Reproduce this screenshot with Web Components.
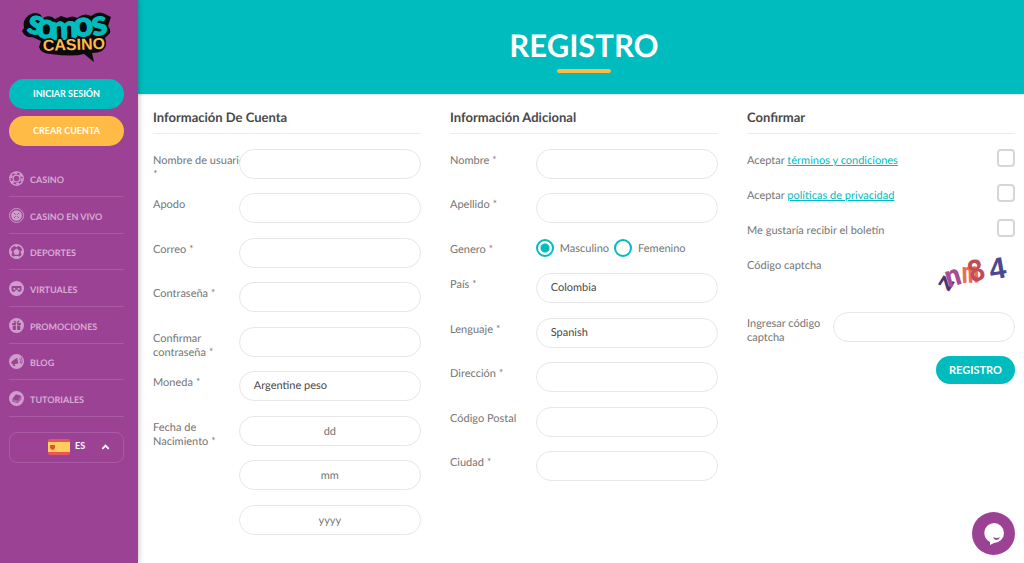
<!DOCTYPE html>
<html lang="es">
<head>
<meta charset="utf-8">
<meta name="viewport" content="width=device-width, initial-scale=1">
<title>Somos Casino - Registro</title>
<style>
  :root {
    --purple: #9c4295;
    --teal: #00bcbe;
    --amber: #ffbb46;
    --line: #ececec;
    --text: #757575;
    --dark: #484848;
  }
  body {
    margin: 0;
    background: #fff;
    color: var(--text);
    font-family: Lato, "Open Sans", sans-serif;
    font-size: 11px;
    line-height: 14px;
    text-rendering: geometricPrecision;
  }
</style>
</head>
<body>
<casino-app>
  <side-bar slot="side">
    <nav-item icon="chip">CASINO</nav-item>
    <nav-item icon="roulette">CASINO EN VIVO</nav-item>
    <nav-item icon="ball">DEPORTES</nav-item>
    <nav-item icon="virtual">VIRTUALES</nav-item>
    <nav-item icon="gift">PROMOCIONES</nav-item>
    <nav-item icon="horn">BLOG</nav-item>
    <nav-item icon="book">TUTORIALES</nav-item>
  </side-bar>
  <page-banner slot="banner">REGISTRO</page-banner>
  <form-section heading="Información De Cuenta">
    <form-field label="Nombre&nbsp;de&nbsp;usuario *"></form-field>
    <form-field label="Apodo"></form-field>
    <form-field label="Correo *" type="email"></form-field>
    <form-field label="Contraseña *" type="password"></form-field>
    <form-field label="Confirmar contraseña *" type="password"></form-field>
    <form-field label="Moneda *" type="select" value="Argentine peso"></form-field>
    <form-field label="Fecha de Nacimiento *" placeholder="dd"></form-field>
    <form-field name="Mes de nacimiento" placeholder="mm"></form-field>
    <form-field name="Año de nacimiento" placeholder="yyyy"></form-field>
  </form-section>
  <form-section heading="Información Adicional">
    <form-field label="Nombre *"></form-field>
    <form-field label="Apellido *"></form-field>
    <gender-field></gender-field>
    <form-field label="País *" type="select" value="Colombia"></form-field>
    <form-field label="Lenguaje *" type="select" value="Spanish"></form-field>
    <form-field label="Dirección *"></form-field>
    <form-field label="Código Postal"></form-field>
    <form-field label="Ciudad *"></form-field>
  </form-section>
  <form-section heading="Confirmar">
    <check-field>Aceptar <a href="#terminos">términos y condiciones</a></check-field>
    <check-field>Aceptar <a href="#privacidad">políticas de privacidad</a></check-field>
    <check-field>Me gustaría recibir el boletín</check-field>
    <captcha-row></captcha-row>
    <form-field label="Ingresar código captcha"></form-field>
    <submit-button>REGISTRO</submit-button>
  </form-section>
  <chat-button slot="chat"></chat-button>
</casino-app>

<script>
const define = (name, render) => customElements.define(name, class extends HTMLElement {
  connectedCallback() {
    if (this.shadowRoot) return;
    const root = this.attachShadow({ mode: 'open' });
    root.innerHTML = '<style>*{box-sizing:border-box}</style>' + render(this);
  }
});

define('casino-app', () => `
<style>
  :host { display: flex; min-height: 100vh; }
  .main { flex: 1; min-width: 0; }
  form { display: grid; grid-template-columns: repeat(3, minmax(0, 1fr)); gap: 29px; padding: 16px 9px 28px 15px; }
</style>
<slot name="side"></slot>
<div class="main">
  <slot name="banner"></slot>
  <form><slot></slot></form>
</div>
<slot name="chat"></slot>`);

define('side-bar', () => `
<style>
  :host { display: block; flex: 0 0 138px; padding: 9px 14px 9px 9px; box-sizing: border-box;
    background: var(--purple); box-shadow: 0 0 6px rgba(0,0,0,.3); position: relative; z-index: 1; }
  .logo { display: block; }
  .logo svg { display: block; margin: 0 auto; overflow: visible; }
  .actions { display: grid; gap: 7px; margin: 14px 0; }
  button { font: 700 9px/14px Lato, sans-serif; color: #fff; border: 0; border-radius: 16px; height: 30px; padding: 0; cursor: pointer; }
  .in { background: var(--teal); }
  .new { background: var(--amber); }
  nav { display: block; }
  .lang { display: flex; align-items: center; width: 100%; height: 31px; margin-top: 15px; padding: 0 13px 2px 38px;
    background: none; border: 1px solid #ab5ba4; border-radius: 8px; }
  .lang span { margin: 0 auto 0 5px; padding-bottom: 2px; }
</style>
<a class="logo" href="#inicio" aria-label="Somos Casino">
  <svg width="96" height="56" viewBox="20 9 96 56">
    <path d="M23 31 L25 28 Q23 20 30 15 Q37 11 42 15 L43 19 Q47 15 53 17 L56 19 L62 16 L68 18 Q74 15 78 18 Q85 12 92 16 Q99 10 106 14 L112 17 L109 26 Q114 32 108 36 L106 38 Q109 46 103 51 Q99 53 93 53 L95 62 L85 54 Q74 57 52 54 Q42 54 40 47 L42 41 Q36 38 33 37 Q26 38 23 31Z" fill="#0c090b"/>
    <g font-family="Lato, sans-serif" font-weight="900" fill="#00bcbe" stroke="#00bcbe" stroke-width="1">
      <text font-size="35" transform="translate(27 32) rotate(14)">s</text>
      <text font-size="35" transform="translate(37 38) rotate(2)">o</text>
      <text font-size="34" transform="translate(51 40) rotate(-2)">m</text>
      <text font-size="35" transform="translate(75 37) rotate(-5)">o</text>
      <text font-size="35" transform="translate(94 36) rotate(-8)">s</text>
    </g>
    <text x="44" y="51" font-family="Liberation Sans, sans-serif" font-weight="700" font-size="16" fill="#ffbb46" stroke="#0c090b" stroke-width="3" paint-order="stroke" transform="rotate(-2 44 51)">CASINO</text>
  </svg>
</a>
<div class="actions">
  <button class="in" type="button">INICIAR SESIÓN</button>
  <button class="new" type="button">CREAR CUENTA</button>
</div>
<nav><slot></slot></nav>
<button class="lang" type="button">
  <svg width="22" height="16" viewBox="0 0 22 16"><rect width="22" height="16" rx="2" fill="#e9555c"/><rect y="3" width="22" height="10" fill="#ffcf5c"/><path d="M2 6h5v3q-1 2-2.500 2Q2.500 10 2 9z" fill="#e0503f"/></svg>
  <span>ES</span>
  <svg width="9" height="6" viewBox="0 0 9 6"><path d="M1.300 4.800 4.500 1.600 7.700 4.800" fill="none" stroke="#fff" stroke-width="1.800"/></svg>
</button>`);

const P = '#9c4295', L = '#cf9fcb';
const disc = `<circle cx="12" cy="12" r="12" fill="${L}"/>`;
const icons = {
  chip: `<circle cx="12" cy="12" r="10.800" fill="none" stroke="${L}" stroke-width="2"/><circle cx="12" cy="12" r="8.600" fill="none" stroke="${L}" stroke-width="3" stroke-dasharray="4.500 4.500"/><circle cx="12" cy="12" r="5.500" fill="none" stroke="${L}" stroke-width="2"/>`,
  roulette: `<circle cx="12" cy="12" r="11.200" fill="none" stroke="${L}" stroke-width="1.500"/><circle cx="12" cy="12" r="8.500" fill="${L}"/><path d="M8 8l8 8M16 8l-8 8" stroke="${P}" stroke-width="1.500"/><circle cx="12" cy="12" r="2" fill="${L}"/>`,
  ball: `<circle cx="12" cy="12" r="10.800" fill="none" stroke="${L}" stroke-width="2.400"/><path d="M12 7l5 4-2 6H9l-2-6zM7 2l5 3 5-3zM1 9l4 2v5l-3 1zM23 9l-4 2v5l3 1zM8 19h8l-1 4H9z" fill="${L}"/>`,
  virtual: disc + `<path d="M5 8h14q1 0 1 2v4q0 3-3 3h-2l-2-3h-2l-2 3H7q-3 0-3-3v-4q0-2 1-2z" fill="${P}"/><path d="M7 11h3v3H7zM14 11h3v3h-3z" fill="${L}"/>`,
  gift: disc + `<path d="M5 8h6v3H5zM13 8h6v3h-6zM6 12h5v7H6zM13 12h5v7h-5zM11 8Q6 7 8 4q3 0 4 4 1-4 4-4 2 3-3 4z" fill="${P}"/>`,
  horn: disc + `<path d="M4 12l9-6 2 9-6 1 1 3H7l-1-3H4z" fill="${P}"/><path d="M17 7q3 3 1 8M19 5q4 5 1 11" fill="none" stroke="${P}" stroke-width="1.300"/>`,
  book: disc + `<path d="M11 5l9 3-6 8-9-3z" fill="${P}"/><path d="M5 14l9 3 6-7M5 16l9 3 6-7" fill="none" stroke="${P}" stroke-width="1.200"/>`
};
define('nav-item', el => `
<style>
  :host { display: block; border-bottom: 1px solid #ab5ba4; }
  a { display: flex; align-items: center; gap: 6px; height: 36px; color: #d6abd2; font-size: 9px; font-weight: 700; text-decoration: none; }
  span { padding-top: 3px; }
  :host(:nth-child(3n)) a { height: 35px; }
</style>
<a href="#"><svg width="15" height="15" viewBox="0 0 24 24">${icons[el.getAttribute('icon')]}</svg><span><slot></slot></span></a>`);

define('page-banner', () => `
<style>
  :host { display: flex; flex-direction: column; align-items: center; padding: 25px 9px 21px 15px; background: var(--teal); box-shadow: 0 1px 2px rgba(0,0,0,.15); }
  h1 { margin: 0; font-size: 31px; line-height: 40px; font-weight: 700; color: #fff; }
  i { width: 54px; height: 4px; margin-top: 4px; border-radius: 2px; background: var(--amber); }
</style>
<h1><slot></slot></h1><i></i>`);

define('form-section', el => `
<style>
  :host { display: block; }
  h2 { margin: 0 0 15px; padding-bottom: 9px; border-bottom: 1px solid var(--line); color: var(--dark); font-size: 13px; line-height: 14px; font-weight: 700; }
  .rows { display: grid; gap: 14px; }
</style>
<h2>${el.getAttribute('heading')}</h2>
<div class="rows"><slot></slot></div>`);

define('form-field', el => {
  const type = el.getAttribute('type') || 'text', label = el.getAttribute('label');
  const name = label ? '' : `aria-label="${el.getAttribute('name')}"`;
  const control = type === 'select'
    ? `<select id="c"><option>${el.getAttribute('value')}</option></select>`
    : `<input id="c" type="${type}" ${name} placeholder="${el.getAttribute('placeholder') || ''}">`;
  return `
<style>
  :host { display: grid; grid-template-columns: 32% 68%; align-items: start; height: 30px; }
  :host(:nth-child(even)) { padding-bottom: 1px; }
  label { padding-top: 5px; }
  input, select { grid-column: 2; width: 100%; height: 30px; margin: 0; padding: 0 14px; border: 1px solid #e6e6e6; border-radius: 15px;
    background: #fff; color: var(--dark); font: 11px/14px Lato, sans-serif; text-rendering: inherit; appearance: none; outline: 0; }
  input::placeholder { color: var(--text); text-align: center; opacity: 1; }
</style>
${label ? `<label for="c">${label}</label>` : ''}${control}`;
});

define('gender-field', () => `
<style>
  :host { display: block; }
  fieldset { display: grid; grid-template-columns: 32% 68%; height: 21px; margin: 0; padding: 0; border: 0; }
  .name { padding-top: 5px; }
  .opts { display: flex; align-items: start; gap: 5px; }
  label { display: flex; gap: 6px; line-height: 22px; }
  input { appearance: none; width: 18px; height: 18px; margin: 1px 0; border: 2px solid var(--teal); border-radius: 50%; background: #fff; }
  input:checked { background: radial-gradient(circle, var(--teal) 4px, #fff 5px); }
</style>
<fieldset aria-label="Genero">
  <span class="name">Genero *</span>
  <div class="opts">
    <label><input type="radio" name="g" checked>Masculino</label>
    <label><input type="radio" name="g">Femenino</label>
  </div>
</fieldset>`);

define('check-field', () => `
<style>
  :host { display: block; }
  label { display: flex; justify-content: space-between; height: 21px; }
  span { padding-top: 5px; }
  input { appearance: none; flex: none; width: 18px; height: 18px; margin: 0; border: 2px solid #d6d6d6; border-radius: 4px; background: #fff; }
  ::slotted(a) { color: var(--teal); }
</style>
<label><span><slot></slot></span><input type="checkbox"></label>`);

define('captcha-row', () => `
<style>
  :host { display: flex; justify-content: space-between; height: 44px; }
  span { padding-top: 5px; }
  svg { overflow: visible; }
</style>
<span>Código captcha</span>
<svg width="82" height="44" viewBox="932 254 82 44" font-family="DejaVu Sans Mono, monospace" font-weight="700">
  <text font-size="24" fill="#49356f" transform="translate(947 293) rotate(-58)">z</text>
  <text font-size="29" fill="#a54e92" transform="translate(946 288) rotate(-16)">n</text>
  <text font-size="29" fill="#f06b50" transform="translate(961 283) rotate(-2)">m</text>
  <text font-size="29" fill="#c04c57" transform="translate(970 283) rotate(-18)">8</text>
  <text font-size="30" font-family="Liberation Sans, sans-serif" fill="#4e478e" transform="translate(990 280) rotate(-10)">4</text>
</svg>`);

define('submit-button', () => `
<style>
  :host { display: flex; justify-content: flex-end; }
  button { width: 79px; height: 28px; padding: 0; border: 0; border-radius: 14px; background: var(--teal); color: #fff; font: 700 11px/14px Lato, sans-serif; cursor: pointer; }
</style>
<button type="submit"><slot></slot></button>`);

define('chat-button', () => `
<style>
  :host { position: fixed; right: 9px; bottom: 8px; }
  button { display: block; width: 43px; height: 43px; padding: 0; border: 0; border-radius: 50%; background: var(--purple); cursor: pointer; }
  svg { display: block; margin: auto; }
</style>
<button type="button" aria-label="Chat"><svg width="22" height="24" viewBox="0 0 22 24"><path d="M11 1a10 10 0 0 1 0 20q-2 1-4 2V20A10 10 0 0 1 11 1z" fill="#fff"/><path d="M10 15q4 2 7 0-1 3-4 3-2 0-3-3z" fill="#9c4295"/></svg></button>`);
</script>
</body>
</html>
